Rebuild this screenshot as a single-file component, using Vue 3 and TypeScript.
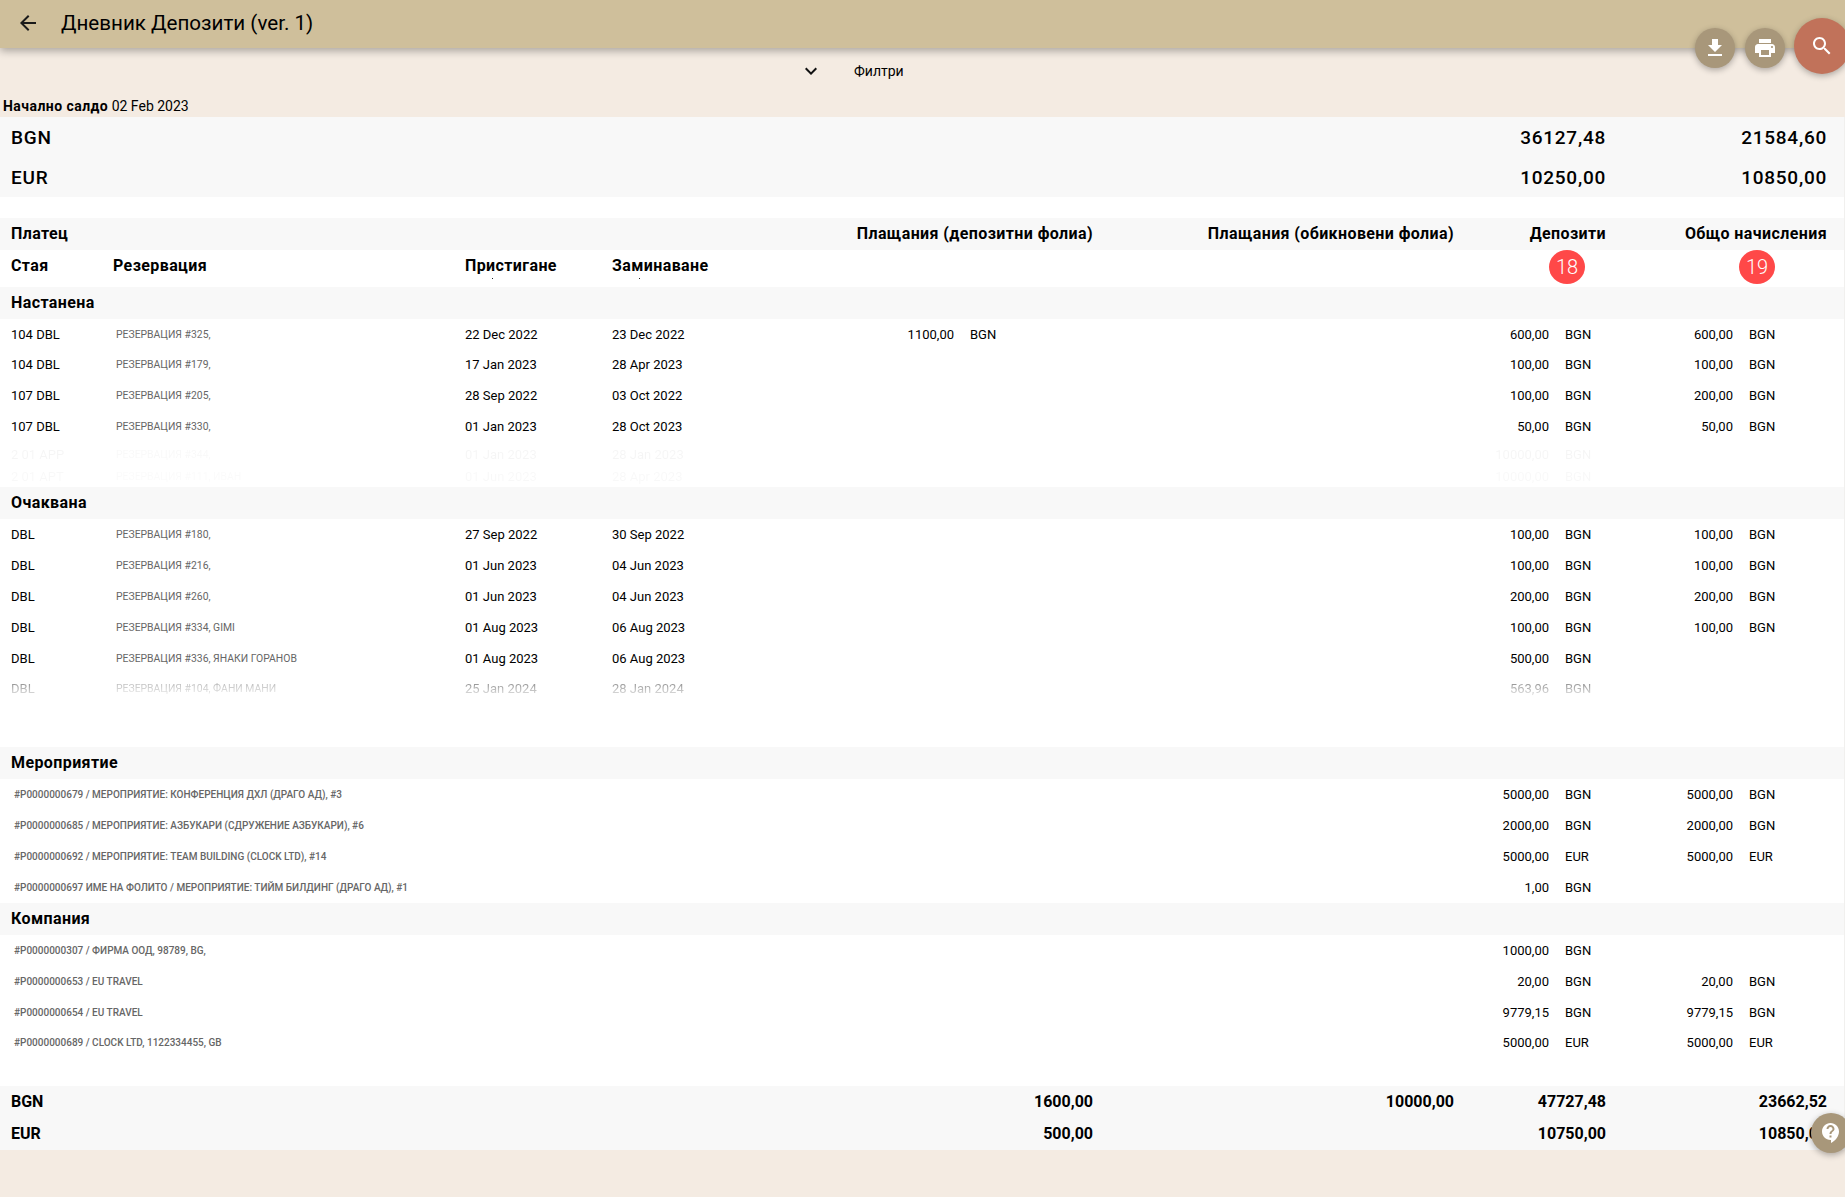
<script setup lang="ts">
type Row = {
  room?: string
  res?: string
  arr?: string
  dep?: string
  label?: string
  pay?: string
  payCur?: string
  dAmt?: string
  dCur?: string
  tAmt?: string
  tCur?: string
  cls?: string
}
type Group = { title: string; cls: string; rows: Row[] }

const bgn = 'BGN'
const eur = 'EUR'

const groups: Group[] = [
  {
    title: 'Настанена',
    cls: 'body-a',
    rows: [
      { room: '104 DBL', res: 'РЕЗЕРВАЦИЯ #325,', arr: '22 Dec 2022', dep: '23 Dec 2022', pay: '1100,00', payCur: bgn, dAmt: '600,00', dCur: bgn, tAmt: '600,00', tCur: bgn },
      { room: '104 DBL', res: 'РЕЗЕРВАЦИЯ #179,', arr: '17 Jan 2023', dep: '28 Apr 2023', dAmt: '100,00', dCur: bgn, tAmt: '100,00', tCur: bgn },
      { room: '107 DBL', res: 'РЕЗЕРВАЦИЯ #205,', arr: '28 Sep 2022', dep: '03 Oct 2022', dAmt: '100,00', dCur: bgn, tAmt: '200,00', tCur: bgn },
      { room: '107 DBL', res: 'РЕЗЕРВАЦИЯ #330,', arr: '01 Jan 2023', dep: '28 Oct 2023', dAmt: '50,00', dCur: bgn, tAmt: '50,00', tCur: bgn },
      { room: '2 01 APP', res: 'РЕЗЕРВАЦИЯ #344,', arr: '01 Jan 2023', dep: '28 Jan 2023', dAmt: '10000,00', dCur: bgn, cls: 'ghost-a' },
      { room: '2 01 APT', res: 'РЕЗЕРВАЦИЯ #111, ИВАН', arr: '01 Jun 2023', dep: '28 Apr 2023', dAmt: '10000,00', dCur: bgn, cls: 'ghost-b' }
    ]
  },
  {
    title: 'Очаквана',
    cls: 'body-b',
    rows: [
      { room: 'DBL', res: 'РЕЗЕРВАЦИЯ #180,', arr: '27 Sep 2022', dep: '30 Sep 2022', dAmt: '100,00', dCur: bgn, tAmt: '100,00', tCur: bgn },
      { room: 'DBL', res: 'РЕЗЕРВАЦИЯ #216,', arr: '01 Jun 2023', dep: '04 Jun 2023', dAmt: '100,00', dCur: bgn, tAmt: '100,00', tCur: bgn },
      { room: 'DBL', res: 'РЕЗЕРВАЦИЯ #260,', arr: '01 Jun 2023', dep: '04 Jun 2023', dAmt: '200,00', dCur: bgn, tAmt: '200,00', tCur: bgn },
      { room: 'DBL', res: 'РЕЗЕРВАЦИЯ #334, GIMI', arr: '01 Aug 2023', dep: '06 Aug 2023', dAmt: '100,00', dCur: bgn, tAmt: '100,00', tCur: bgn },
      { room: 'DBL', res: 'РЕЗЕРВАЦИЯ #336, ЯНАКИ ГОРАНОВ', arr: '01 Aug 2023', dep: '06 Aug 2023', dAmt: '500,00', dCur: bgn },
      { room: 'DBL', res: 'РЕЗЕРВАЦИЯ #104, ФАНИ МАНИ', arr: '25 Jan 2024', dep: '28 Jan 2024', dAmt: '563,96', dCur: bgn, cls: 'ghost-c' }
    ]
  },
  {
    title: 'Мероприятие',
    cls: 'body-c',
    rows: [
      { label: '#P0000000679 / МЕРОПРИЯТИЕ: КОНФЕРЕНЦИЯ ДХЛ (ДРАГО АД), #3', dAmt: '5000,00', dCur: bgn, tAmt: '5000,00', tCur: bgn },
      { label: '#P0000000685 / МЕРОПРИЯТИЕ: АЗБУКАРИ (СДРУЖЕНИЕ АЗБУКАРИ), #6', dAmt: '2000,00', dCur: bgn, tAmt: '2000,00', tCur: bgn },
      { label: '#P0000000692 / МЕРОПРИЯТИЕ: TEAM BUILDING (CLOCK LTD), #14', dAmt: '5000,00', dCur: eur, tAmt: '5000,00', tCur: eur },
      { label: '#P0000000697 ИМЕ НА ФОЛИТО / МЕРОПРИЯТИЕ: ТИЙМ БИЛДИНГ (ДРАГО АД), #1', dAmt: '1,00', dCur: bgn }
    ]
  },
  {
    title: 'Компания',
    cls: 'body-d',
    rows: [
      { label: '#P0000000307 / ФИРМА ООД, 98789, BG,', dAmt: '1000,00', dCur: bgn },
      { label: '#P0000000653 / EU TRAVEL', dAmt: '20,00', dCur: bgn, tAmt: '20,00', tCur: bgn },
      { label: '#P0000000654 / EU TRAVEL', dAmt: '9779,15', dCur: bgn, tAmt: '9779,15', tCur: bgn },
      { label: '#P0000000689 / CLOCK LTD, 1122334455, GB', dAmt: '5000,00', dCur: eur, tAmt: '5000,00', tCur: eur }
    ]
  }
]

const opening = [
  { cur: 'BGN', a: '36127,48', b: '21584,60' },
  { cur: 'EUR', a: '10250,00', b: '10850,00' }
]
const totals = [
  { cur: 'BGN', p1: '1600,00', p2: '10000,00', a: '47727,48', b: '23662,52' },
  { cur: 'EUR', p1: '500,00', p2: '', a: '10750,00', b: '10850,00' }
]
</script>

<template>
  <div class="page">
    <header class="topbar">
      <svg class="back" viewBox="0 0 24 24" width="24" height="24"><path d="M20 11H7.83l5.59-5.59L12 4l-8 8 8 8 1.41-1.41L7.83 13H20v-2z" /></svg>
      <h1 class="title">Дневник Депозити (ver. 1)</h1>
    </header>

    <div class="filters">
      <svg viewBox="0 0 24 24" width="24" height="24"><path d="M16.59 8.59L12 13.17 7.41 8.59 6 10l6 6 6-6z" /></svg>
      <span class="filters-label">Филтри</span>
    </div>

    <div class="opening-date"><b>Начално салдо</b> 02 Feb 2023</div>

    <main class="sheet">
      <section class="opening">
        <div v-for="o in opening" :key="o.cur" class="grid opening-row">
          <span class="c-all">{{ o.cur }}</span>
          <span class="c-dep num">{{ o.a }}</span>
          <span class="c-tot num">{{ o.b }}</span>
        </div>
      </section>

      <section class="heads">
        <div class="grid band">
          <span class="c-all">Платец</span>
          <span class="c-pay num">Плащания (депозитни фолиа)</span>
          <span class="c-inv num">Плащания (обикновени фолиа)</span>
          <span class="c-dep num">Депозити</span>
          <span class="c-tot num">Общо начисления</span>
        </div>
        <div class="grid subhead">
          <span class="c1">Стая</span>
          <span class="c2">Резервация</span>
          <span class="c3 dot">Пристигане</span>
          <span class="c4 dot">Заминаване</span>
          <span class="c-dcur"><span class="badge">18</span></span>
          <span class="c-tcur"><span class="badge badge-t">19</span></span>
        </div>
      </section>

      <section v-for="g in groups" :key="g.title">
        <div class="grid band"><span class="c-all">{{ g.title }}</span></div>
        <div class="group-body" :class="g.cls">
          <div v-for="(r, i) in g.rows" :key="i" class="grid row" :class="r.cls">
            <template v-if="r.label">
              <span class="label">{{ r.label }}</span>
            </template>
            <template v-else>
              <span class="c1">{{ r.room }}</span>
              <span class="c2 res">{{ r.res }}</span>
              <span class="c3">{{ r.arr }}</span>
              <span class="c4">{{ r.dep }}</span>
            </template>
            <span v-if="r.pay" class="c-pamt num">{{ r.pay }}</span>
            <span v-if="r.payCur" class="c-pcur cur">{{ r.payCur }}</span>
            <span class="c-damt num">{{ r.dAmt }}</span>
            <span class="c-dcur cur">{{ r.dCur }}</span>
            <span v-if="r.tAmt" class="c-tamt num">{{ r.tAmt }}</span>
            <span v-if="r.tCur" class="c-tcur cur">{{ r.tCur }}</span>
          </div>
        </div>
      </section>

      <section class="totals">
        <div v-for="t in totals" :key="t.cur" class="grid total-row">
          <span class="c-all">{{ t.cur }}</span>
          <span class="c-pay num">{{ t.p1 }}</span>
          <span class="c-inv num">{{ t.p2 }}</span>
          <span class="c-dep num">{{ t.a }}</span>
          <span class="c-tot num">{{ t.b }}</span>
        </div>
      </section>
    </main>

    <button class="fab fab-down" type="button" aria-label="Изтегляне">
      <svg viewBox="0 0 24 24" width="24" height="24"><path d="M19 9h-4V3H9v6H5l7 7 7-7zM5 18v2h14v-2H5z" /></svg>
    </button>
    <button class="fab fab-print" type="button" aria-label="Печат">
      <svg viewBox="0 0 24 24" width="24" height="24"><path d="M19 8H5c-1.66 0-3 1.34-3 3v6h4v4h12v-4h4v-6c0-1.66-1.34-3-3-3zm-3 11H8v-5h8v5zm3-7c-.55 0-1-.45-1-1s.45-1 1-1 1 .45 1 1-.45 1-1 1zm-1-9H6v4h12V3z" /></svg>
    </button>
    <button class="fab fab-search" type="button" aria-label="Търсене">
      <svg viewBox="0 0 24 24" width="24" height="24"><path d="M15.5 14h-.79l-.28-.27C15.41 12.59 16 11.11 16 9.5 16 5.91 13.09 3 9.5 3S3 5.91 3 9.5 5.91 16 9.5 16c1.61 0 3.09-.59 4.23-1.57l.27.28v.79l5 4.99L20.49 19l-4.99-5zm-6 0C7.01 14 5 11.99 5 9.5S7.01 5 9.5 5 14 7.01 14 9.5 11.99 14 9.5 14z" /></svg>
    </button>
    <button class="fab fab-help" type="button" aria-label="Помощ">
      <svg viewBox="0 0 24 24" width="24" height="24"><path d="M11.5 2C6.81 2 3 5.81 3 10.5S6.81 19 11.5 19h.5v3c4.86-2.34 8-7 8-11.5C20 5.81 16.19 2 11.5 2zm1 14.5h-2v-2h2v2zm0-3.5h-2c0-3.25 3-3 3-5 0-1.1-.9-2-2-2s-2 .9-2 2h-2c0-2.21 1.79-4 4-4s4 1.79 4 4c0 2.5-3 2.75-3 5z" /></svg>
    </button>
  </div>
</template>

<style>
html, body { margin: 0; background: #f4ebe2; }
</style>

<style scoped>
.page {
  position: relative;
  width: 1845px;
  height: 1197px;
  overflow: hidden;
  background: #f4ebe2;
  color: #000;
  font-family: Roboto, "Liberation Sans", sans-serif;
  font-size: 13px;
}
.topbar {
  position: relative;
  z-index: 1;
  display: flex;
  align-items: center;
  height: 48px;
  padding: 0 0 2px 16px;
  box-sizing: border-box;
  background: #cfbf9b;
  box-shadow: 0 3px 8px rgba(0, 0, 0, 0.3);
}
.back { fill: #1a1a1a; flex: none; }
.title { margin: 0 0 0 21px; font-size: 20.6px; font-weight: 400; }
.filters {
  display: flex;
  align-items: center;
  height: 45px;
  padding-left: 799px;
  box-sizing: border-box;
}
.filters svg { flex: none; fill: #111; }
.filters-label { margin-left: 31px; font-size: 14px; }
.opening-date { height: 24px; padding-left: 3px; line-height: 26px; font-size: 14px; white-space: pre; }
.opening-date b { font-weight: 700; letter-spacing: 0.45px; }

.sheet {
  background: #fff;
  border-right: 1px solid #f1f0ee;
  height: 1033px;
  display: flex;
  flex-direction: column;
}

.grid {
  display: grid;
  grid-template-columns: 102px 352px 147px 188px 154px 139px 361px 95px 57px 127px 94px;
  padding-left: 11px;
  align-items: center;
}
.c-all { grid-column: 1 / 4; }
.c1 { grid-column: 1; }
.c2 { grid-column: 2; }
.c3 { grid-column: 3; }
.c4 { grid-column: 4; }
.c-pamt { grid-column: 5; }
.c-pcur { grid-column: 6; }
.c-pay { grid-column: 4 / 7; }
.c-inv { grid-column: 7; }
.c-damt { grid-column: 8; }
.c-dcur { grid-column: 9; }
.c-dep { grid-column: 8 / 10; }
.c-tamt { grid-column: 10; }
.c-tcur { grid-column: 11; }
.c-tot { grid-column: 10 / 12; }
.num { text-align: right; }
.cur { padding-left: 16px; }

.opening { background: #f8f8f8; margin-bottom: 21px; }
.opening-row { height: 40px; font-size: 19px; font-weight: 500; letter-spacing: 0.75px; }

.band {
  height: 32px;
  padding-bottom: 1px;
  box-sizing: border-box;
  background: #f8f8f8;
  font-size: 16px;
  font-weight: 700;
  letter-spacing: 0.4px;
}

.subhead { height: 37px; font-size: 16px; font-weight: 700; letter-spacing: 0.4px; align-items: start; line-height: 32px; }
.dot { position: relative; }
.dot::after {
  content: "";
  position: absolute;
  left: 27px;
  top: 28px;
  width: 1px;
  height: 1px;
  background: #222;
}
.badge {
  display: block;
  width: 36px;
  height: 34px;
  border-radius: 50%;
  background: #ff4848;
  color: #fff;
  font-size: 20px;
  font-weight: 300;
  letter-spacing: 0;
  line-height: 34px;
  text-align: center;
}
.badge-t { margin-left: 6px; }

.group-body { overflow: hidden; }
.body-a { height: 168px; }
.body-b { height: 228px; }
.body-c { height: 124px; }
.body-d { height: 151px; padding-top: 0.2px; box-sizing: border-box; }
.row { height: 30.8px; font-size: 13px; }
.body-a .row { height: 30.6px; }
.body-b .row { height: 30.9px; }
.body-c .row { height: 31px; }
.res { font-size: 10.4px; color: #666; padding-left: 3px; white-space: nowrap; }
.label { grid-column: 1 / 8; font-size: 10px; font-weight: 500; color: #666; padding-left: 3px; white-space: nowrap; }
.body-a .ghost-a { opacity: 0.035; height: 27.2px; }
.body-a .ghost-b { opacity: 0.025; height: 12.8px; }
.body-b .ghost-c {
  -webkit-mask-image: linear-gradient(to bottom, rgba(0, 0, 0, 0.45) 30%, rgba(0, 0, 0, 0.12) 70%);
  mask-image: linear-gradient(to bottom, rgba(0, 0, 0, 0.45) 30%, rgba(0, 0, 0, 0.12) 70%);
}

.totals { background: #f8f8f8; }
.total-row { height: 32px; padding-bottom: 1px; box-sizing: border-box; font-size: 16px; font-weight: 700; }

.fab {
  position: absolute;
  z-index: 2;
  display: flex;
  align-items: center;
  justify-content: center;
  padding: 0;
  border: 0;
  border-radius: 50%;
  background: #a8977a;
  box-shadow: 0 2px 6px rgba(0, 0, 0, 0.3);
}
.fab svg { fill: #fff; }
.fab-down { left: 1695px; top: 28px; width: 40px; height: 40px; }
.fab-print { left: 1745px; top: 28px; width: 40px; height: 40px; }
.fab-search { left: 1794px; top: 18px; width: 56px; height: 56px; background: #c1725a; }
.fab-help { left: 1811px; top: 1113px; width: 40px; height: 40px; }
</style>
